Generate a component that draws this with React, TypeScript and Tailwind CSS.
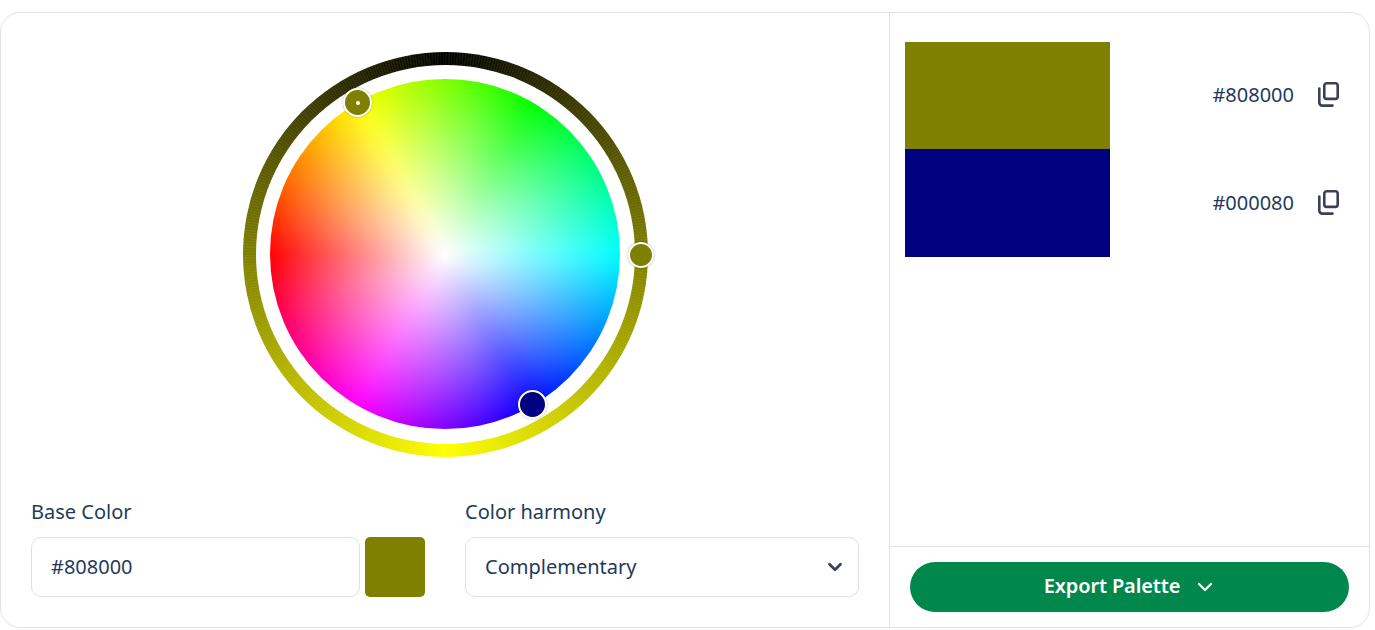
import { ChevronDown } from "lucide-react";

function CopyIcon() {
  return (
    <svg width="24" height="26" viewBox="0 0 24 26" fill="none" stroke="#3b4058" strokeWidth="2.6" strokeLinejoin="round" strokeLinecap="round">
      <rect x="8.3" y="1.3" width="13.4" height="15.6" rx="2.5" />
      <path d="M3.3 6.5 V20.6 a3 3 0 0 0 3 3 H16.5" />
    </svg>
  );
}

function Swatch({ color, hex, heightClass, groupClass }: { color: string; hex: string; heightClass: string; groupClass: string }) {
  return (
    <div className={`flex items-center ${heightClass}`}>
      <div className="h-full w-[205px]" style={{ backgroundColor: color }} />
      <div className={`ml-auto flex items-center pr-[29px] ${groupClass}`}>
        <span className="text-[20px] text-[#1f3a5c]">{hex}</span>
        <span className="ml-[22px] flex"><CopyIcon /></span>
      </div>
    </div>
  );
}

export default function App() {
  return (
    <div className="bg-white pt-3 font-['Noto_Sans','Open_Sans',sans-serif]">
      <div className="flex h-[616px] w-[1370px] overflow-hidden rounded-[20px] border border-[#e1e3e6] bg-white">
        <div className="flex w-[889px] shrink-0 flex-col border-r border-[#e1e3e6] px-[30px]">
          <div className="mt-[39px] flex justify-center">
            <div className="relative h-[405px] w-[405px] shrink-0 rounded-full bg-[conic-gradient(#000,#ffff00_180deg,#000)] p-[13px]">
              <div className="absolute inset-0 rounded-full bg-[repeating-conic-gradient(rgba(255,255,255,0.05)_0deg,rgba(255,255,255,0.05)_0.4deg,transparent_0.4deg,transparent_0.8deg)]" />
              <div className="relative h-[379px] w-[379px] rounded-full bg-white pl-[14.5px] pt-[14px]">
                <div className="relative h-[350px] w-[350px] overflow-hidden rounded-full">
                  <div className="absolute inset-[-16px] bg-[conic-gradient(from_90deg,#00ffff,#0000ff,#ff00ff,#ff0000,#ffff00,#00ff00,#00ffff)] blur-[8px]" />
                  <div className="absolute inset-0 rounded-full bg-[radial-gradient(closest-side,#ffffff,rgba(255,255,255,0))]" />
                </div>
              </div>
              <div className="absolute left-[100.5px] top-[36px] flex h-[29px] w-[29px] items-center justify-center rounded-full border-2 border-white bg-[#808000] shadow-[0_0_2px_rgba(0,0,0,0.35)]">
                <div className="h-[4px] w-[4px] rounded-full bg-white" />
              </div>
              <div className="absolute left-[385.5px] top-[190px] h-[26px] w-[26px] rounded-full border-2 border-white bg-[#808000] shadow-[0_0_2px_rgba(0,0,0,0.4)]" />
              <div className="absolute left-[275px] top-[338px] h-[29px] w-[29px] rounded-full border-2 border-white bg-[#000080] shadow-[0_0_2px_rgba(0,0,0,0.35)]" />
            </div>
          </div>
          <div className="mt-[41px] flex gap-[40px]">
            <div className="w-[394px]">
              <div className="text-[20px] leading-[27px] text-[#1f3a5c]">Base Color</div>
              <div className="mt-[12px] flex gap-[5px]">
                <div className="flex h-[60px] w-[329px] items-center rounded-[10px] border border-[#dfe1e5] pl-[19px] text-[20px] text-[#1f3a5c]">#808000</div>
                <div className="h-[60px] w-[60px] rounded-[5px] bg-[#808000]" />
              </div>
            </div>
            <div className="w-[394px]">
              <div className="text-[20px] leading-[27px] text-[#1f3a5c]">Color harmony</div>
              <div className="mt-[12px] flex h-[60px] items-center justify-between rounded-[10px] border border-[#dfe1e5] pl-[19px] pr-[12.5px] text-[20px] text-[#1f3a5c]">
                <span>Complementary</span>
                <ChevronDown size={22} strokeWidth={3} className="text-[#3b4058]" />
              </div>
            </div>
          </div>
        </div>
        <div className="flex min-w-0 flex-1 flex-col">
          <div className="flex-1 pl-[15px] pt-[29px]">
            <Swatch color="#808000" hex="#808000" heightClass="h-[107px]" groupClass="pb-[1px]" />
            <Swatch color="#000080" hex="#000080" heightClass="h-[108px]" groupClass="pb-0" />
          </div>
          <div className="border-t border-[#e1e3e6] px-[20px] pb-[15px] pt-[15px]">
            <div className="flex h-[50px] items-center justify-center gap-[13px] rounded-full bg-[#00874c] pl-[2px] text-[20px] font-semibold text-white">
              <span className="mb-[2px] tracking-[-0.15px]">Export Palette</span>
              <ChevronDown size={24} strokeWidth={2.2} />
            </div>
          </div>
        </div>
      </div>
    </div>
  );
}
